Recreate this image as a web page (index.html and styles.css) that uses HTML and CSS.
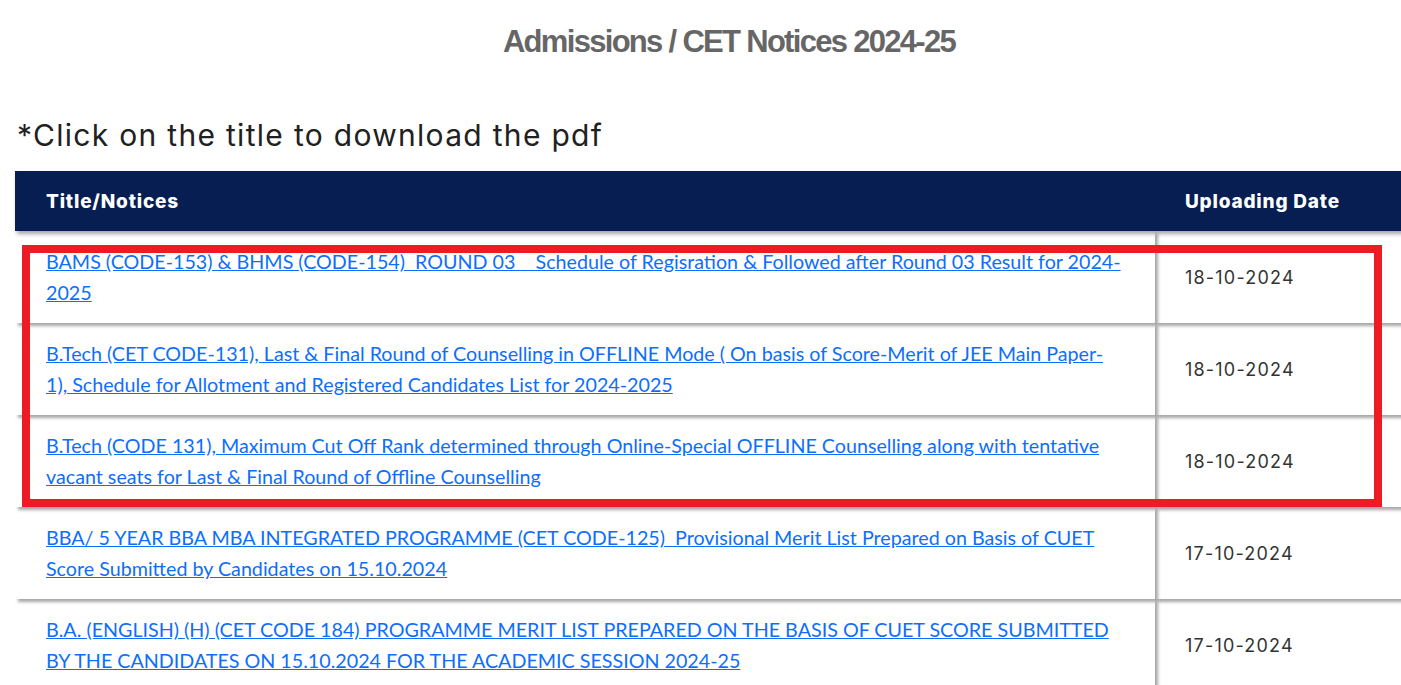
FILE: index.html
```html
<!DOCTYPE html>
<html lang="en">
<head>
<meta charset="utf-8">
<title>Admissions / CET Notices 2024-25</title>
<link rel="stylesheet" href="styles.css">
</head>
<body>
<main class="page">
  <h1 class="page-title">Admissions / CET Notices 2024-25</h1>
  <h2 class="hint">*Click on the title to download the pdf</h2>
  <div class="table-wrap">
    <table class="notices">
      <thead>
        <tr>
          <th class="col-title">Title/Notices</th>
          <th class="col-date">Uploading Date</th>
        </tr>
      </thead>
      <tbody>
        <tr>
          <td class="col-title"><a href="#">BAMS (CODE-153) &amp; BHMS (CODE-154)&nbsp; ROUND 03 &nbsp;&nbsp; Schedule of Regisration &amp; Followed after Round 03 Result for 2024-2025</a></td>
          <td class="col-date">18-10-2024</td>
        </tr>
        <tr>
          <td class="col-title"><a href="#">B.Tech (CET CODE-131), Last &amp; Final Round of Counselling in OFFLINE Mode ( On basis of Score-Merit of JEE Main Paper-1), Schedule for Allotment and Registered Candidates List for 2024-2025</a></td>
          <td class="col-date">18-10-2024</td>
        </tr>
        <tr>
          <td class="col-title"><a href="#">B.Tech (CODE 131), Maximum Cut Off Rank determined through Online-Special OFFLINE Counselling along with tentative vacant seats for Last &amp; Final Round of Offline Counselling</a></td>
          <td class="col-date">18-10-2024</td>
        </tr>
        <tr>
          <td class="col-title"><a href="#">BBA/ 5 YEAR BBA MBA INTEGRATED PROGRAMME (CET CODE-125)&nbsp; Provisional Merit List Prepared on Basis of CUET Score Submitted by Candidates on 15.10.2024</a></td>
          <td class="col-date">17-10-2024</td>
        </tr>
        <tr>
          <td class="col-title"><a href="#">B.A. (ENGLISH) (H) (CET CODE 184) PROGRAMME MERIT LIST PREPARED ON THE BASIS OF CUET SCORE SUBMITTED BY THE CANDIDATES ON 15.10.2024 FOR THE ACADEMIC SESSION 2024-25</a></td>
          <td class="col-date">17-10-2024</td>
        </tr>
      </tbody>
    </table>
    <div class="highlight" aria-hidden="true"></div>
  </div>
</main>
</body>
</html>
```

FILE: styles.css
```css
html, body {
  margin: 0;
  padding: 0;
  background: #ffffff;
  overflow: hidden;
}

.page {
  width: 1428px;
  margin-left: 15px;
}

.page-title {
  margin: 0;
  padding-top: 24px;
  height: 60px;
  box-sizing: border-box;
  text-align: center;
  font-family: "Liberation Sans", Arial, sans-serif;
  font-weight: 700;
  font-size: 31px;
  letter-spacing: -1.7px;
  line-height: 36px;
  color: #666666;
}

.hint {
  margin: 55px 0 0 2px;
  height: 56px;
  font-family: "Inter", "Noto Sans", sans-serif;
  font-weight: 400;
  font-size: 30px;
  line-height: 40px;
  color: #212121;
  letter-spacing: 1.3px;
}

.table-wrap {
  position: relative;
}

.notices {
  width: 100%;
  border-collapse: separate;
  border-spacing: 0;
  table-layout: fixed;
}

.notices th {
  background: #061e52;
  color: #ffffff;
  text-align: left;
  font-family: "Inter", "Noto Sans", sans-serif;
  font-weight: 800;
  font-size: 19px;
  height: 60px;
  padding: 0 0 0 31px;
  box-sizing: border-box;
  letter-spacing: 0.8px;
}

.notices thead tr {
  box-shadow: 2px 3px 4px rgba(0, 0, 0, 0.35);
}

.notices th.col-title {
  width: 1140px;
}

.notices th.col-date {
  padding-left: 30px;
}

.notices td {
  vertical-align: middle;
  box-shadow: 3px 3px 3px rgba(0, 0, 0, 0.35);
  height: 92px;
  box-sizing: border-box;
}

.notices td.col-title {
  padding: 15px 33px 15px 31px;
  font-family: "Lato", "Liberation Sans", sans-serif;
  font-size: 19.7px;
  line-height: 31px;
}

.notices td.col-title a {
  color: #0d6efd;
  text-decoration: underline;
}

.notices td.col-date {
  padding: 0 0 0 30px;
  font-family: "Inter", "Noto Sans", sans-serif;
  font-size: 18px;
  color: #333333;
  letter-spacing: 1.2px;
}

.highlight {
  position: absolute;
  left: 7px;
  top: 74px;
  width: 1360px;
  height: 262px;
  box-sizing: border-box;
  border: 8px solid #ed1c24;
  pointer-events: none;
}
```
